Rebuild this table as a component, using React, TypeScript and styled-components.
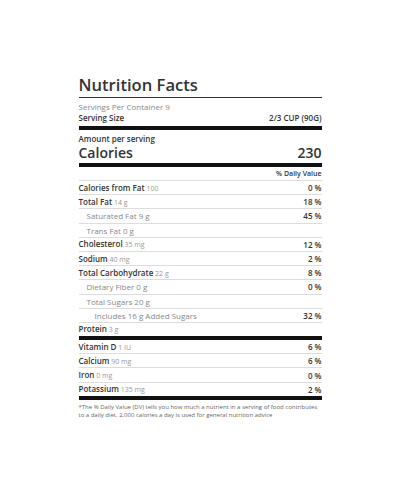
import React from "react";
import styled, { createGlobalStyle } from "styled-components";

const Global = createGlobalStyle`
  body { margin: 0; background: #fff; font-family: "Open Sans", "Noto Sans", sans-serif; color: #333; }
`;

const Label = styled.div`
  width: 243px;
  margin: 0 auto;
  padding-top: 73px;
`;

const Title = styled.h1`
  margin: 0;
  font-size: 16.6px;
  font-weight: 600;
  line-height: 23px;
  color: #333;
  padding-bottom: 1px;
  border-bottom: 1px solid #333;
`;

const Servings = styled.div`
  font-size: 8px;
  line-height: 11px;
  color: #888;
  padding-top: 3px;
`;

const SizeRow = styled.div`
  display: flex;
  justify-content: space-between;
  font-size: 8px;
  font-weight: 600;
  line-height: 11px;
  padding-bottom: 3px;
  border-bottom: 4px solid #111;
`;

const Amount = styled.div`
  font-size: 8px;
  font-weight: 600;
  line-height: 11px;
  padding-top: 3px;
`;

const CalRow = styled.div`
  display: flex;
  justify-content: space-between;
  font-size: 14px;
  font-weight: 600;
  line-height: 17px;
  padding-bottom: 2px;
  border-bottom: 4px solid #111;
`;

const DVHead = styled.div`
  text-align: right;
  font-size: 7px;
  font-weight: 600;
  line-height: 11px;
  padding: 1px 0 1px;
  border-bottom: 1px solid #ddd;
`;

const Row = styled.div<{ $indent?: number; $thick?: boolean }>`
  display: flex;
  justify-content: space-between;
  align-items: center;
  height: 13.2px;
  font-size: 8px;
  line-height: 11px;
  padding-left: ${(p) => (p.$indent ?? 0) * 8}px;
  border-bottom: ${(p) => (p.$thick ? "4px solid #111" : "1px solid #ddd")};
`;

const Name = styled.span<{ $bold?: boolean }>`
  font-weight: ${(p) => (p.$bold ? 600 : 400)};
  color: ${(p) => (p.$bold ? "#333" : "#888")};
`;

const Amt = styled.span`
  font-weight: 400;
  color: #999;
  font-size: 7px;
`;

const Pct = styled.span`
  font-weight: 600;
  color: #333;
`;

const Foot = styled.p`
  margin: 0;
  padding-top: 3px;
  font-size: 6px;
  line-height: 8px;
  color: #666;
`;

type R = { name: string; amt?: string; pct?: string; bold?: boolean; indent?: number; thick?: boolean };

const rows: R[] = [
  { name: "Calories from Fat", amt: "100", pct: "0 %", bold: true },
  { name: "Total Fat", amt: "14 g", pct: "18 %", bold: true },
  { name: "Saturated Fat 9 g", pct: "45 %", indent: 1 },
  { name: "Trans Fat 0 g", indent: 1 },
  { name: "Cholesterol", amt: "35 mg", pct: "12 %", bold: true },
  { name: "Sodium", amt: "40 mg", pct: "2 %", bold: true },
  { name: "Total Carbohydrate", amt: "22 g", pct: "8 %", bold: true },
  { name: "Dietary Fiber 0 g", pct: "0 %", indent: 1 },
  { name: "Total Sugars 20 g", indent: 1 },
  { name: "Includes 16 g Added Sugars", pct: "32 %", indent: 2 },
  { name: "Protein", amt: "3 g", bold: true, thick: true },
  { name: "Vitamin D", amt: "1 IU", pct: "6 %", bold: true },
  { name: "Calcium", amt: "90 mg", pct: "6 %", bold: true },
  { name: "Iron", amt: "0 mg", pct: "0 %", bold: true },
  { name: "Potassium", amt: "135 mg", pct: "2 %", bold: true, thick: true },
];

export default function App() {
  return (
    <>
      <Global />
      <Label>
        <Title>Nutrition Facts</Title>
        <Servings>Servings Per Container 9</Servings>
        <SizeRow>
          <span>Serving Size</span>
          <span>2/3 CUP (90G)</span>
        </SizeRow>
        <Amount>Amount per serving</Amount>
        <CalRow>
          <span>Calories</span>
          <span>230</span>
        </CalRow>
        <DVHead>% Daily Value</DVHead>
        {rows.map((r) => (
          <Row key={r.name} $indent={r.indent} $thick={r.thick}>
            <span>
              <Name $bold={r.bold}>{r.name}</Name>
              {r.amt && <Amt> {r.amt}</Amt>}
            </span>
            {r.pct && <Pct>{r.pct}</Pct>}
          </Row>
        ))}
        <Foot>
          *The % Daily Value (DV) tells you how much a nutrient in a serving of food contributes to a daily diet. 2,000 calories a day is used for general nutrition advice
        </Foot>
      </Label>
    </>
  );
}
